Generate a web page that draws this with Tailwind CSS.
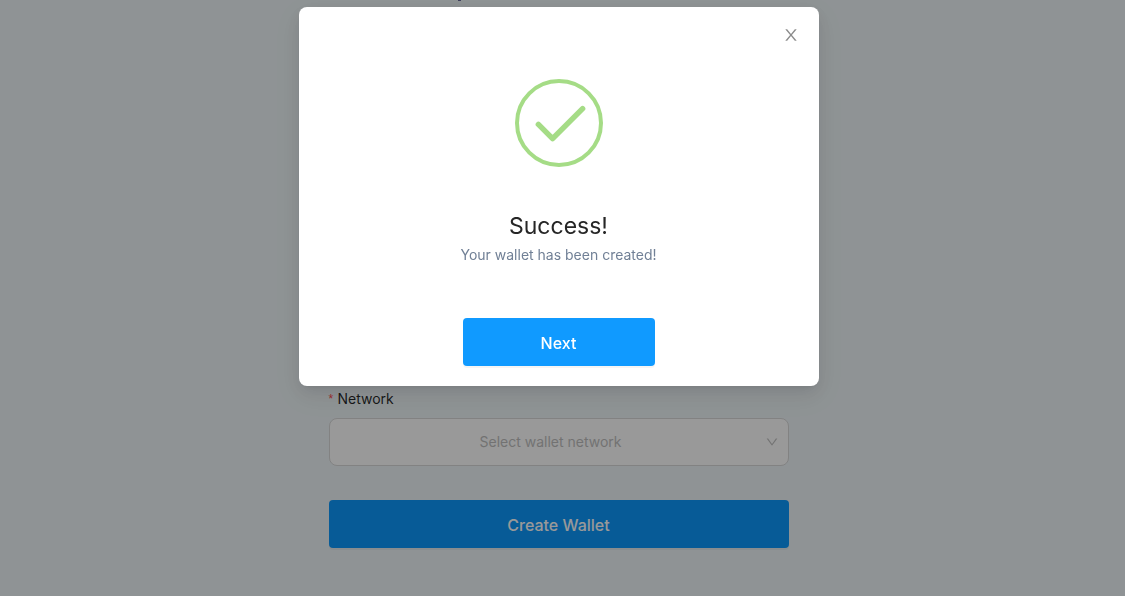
<!DOCTYPE html>
<html lang="en">
<head>
<meta charset="utf-8">
<meta name="viewport" content="width=device-width, initial-scale=1">
<title>Create Wallet</title>
<script src="https://cdn.jsdelivr.net/npm/@tailwindcss/browser@4"></script>
</head>
<body class="min-h-screen bg-[#eff6f9] font-[Inter,sans-serif] text-[14px] text-[#262626]">
  <main class="relative flex min-h-screen justify-center border-b border-[#e2e4e6] pr-2 pt-[388px]">
    <!-- tail of the heading scrolled out of view -->
    <span aria-hidden="true" class="absolute left-[458px] top-0 h-px w-[3px] bg-[#6b6b9a]"></span>
    <form class="w-full max-w-[460px] pb-12">
      <label for="network" class="flex gap-1 leading-[22px] text-black/85"><span class="w-[5px] font-[Liberation_Sans] text-xs leading-[22px] text-[#ff4d4f]">*</span>Network</label>
      <div class="relative mt-2">
        <select id="network" class="h-12 w-full appearance-none rounded-lg border border-[#d9d9d9] bg-white pb-0.5 pl-4 pr-8 text-center text-[#bfbfbf]">
          <option>Select wallet network</option>
        </select>
        <svg class="pointer-events-none absolute right-2.5 top-[17px] size-3.5 text-[#bfbfbf]" viewBox="0 0 1024 1024" fill="currentColor"><path d="M884 256h-75c-5.1 0-9.9 2.5-12.9 6.6L512 654.2 227.9 262.6c-3-4.1-7.8-6.6-12.9-6.6h-75c-6.5 0-10.3 7.4-6.5 12.7l352.6 486.1c12.8 17.6 39 17.6 51.7 0l352.6-486.1c3.9-5.3.1-12.7-6.4-12.7z"/></svg>
      </div>
      <button type="button" class="mt-[34px] h-12 w-full rounded bg-[#0c98fc] pt-0.5 text-base font-medium text-white shadow-[0_2px_0_rgba(0,0,0,0.04)]">Create Wallet</button>
    </form>
  </main>

  <div class="fixed inset-0 flex items-start justify-center bg-black/40 pr-2 pt-[7px]">
    <section role="dialog" aria-modal="true" aria-labelledby="dialog-title" class="relative flex w-full max-w-[520px] flex-col items-center rounded-lg bg-white pb-5 pt-[72px] shadow-[0_6px_16px_0_rgba(0,0,0,0.08),0_3px_6px_-4px_rgba(0,0,0,0.12),0_9px_28px_8px_rgba(0,0,0,0.05)]">
      <button type="button" aria-label="Close" class="absolute right-5 top-5 flex size-4 items-center justify-center text-[#8c8c8c]">
        <svg class="size-[18px] shrink-0" viewBox="0 0 1024 1024" fill="currentColor"><path d="M563.8 512l262.5-312.9c4.4-5.2.7-13.1-6.1-13.1h-79.8c-4.7 0-9.2 2.1-12.3 5.7L511.6 449.8 295.1 191.7c-3-3.6-7.5-5.7-12.3-5.7H203c-6.8 0-10.5 7.9-6.1 13.1L459.4 512 196.9 824.9A7.95 7.95 0 00203 838h79.8c4.7 0 9.2-2.1 12.3-5.7l216.5-258.1 216.5 258.1c3 3.6 7.5 5.7 12.3 5.7h79.8c6.8 0 10.5-7.9 6.1-13.1L563.8 512z"/></svg>
      </button>
      <svg class="size-[88px] text-[#a5dc86]" viewBox="0 0 88 88" fill="none" stroke="currentColor"><circle cx="44" cy="44" r="42" stroke-width="4"/><path d="M23.4 45.4 37.6 59.6 67.6 29.6" stroke-width="5.5" stroke-linecap="round" stroke-linejoin="round"/></svg>
      <h1 id="dialog-title" class="mt-[43px] text-[23px] leading-8">Success!</h1>
      <p class="mt-0.5 leading-[22px] text-[#718096]">Your wallet has been created!</p>
      <button type="button" class="mt-[52px] h-12 w-48 rounded bg-[#109aff] pt-0.5 text-base font-medium text-white shadow-[0_2px_0_rgba(0,0,0,0.04)]">Next</button>
    </section>
  </div>
</body>
</html>
